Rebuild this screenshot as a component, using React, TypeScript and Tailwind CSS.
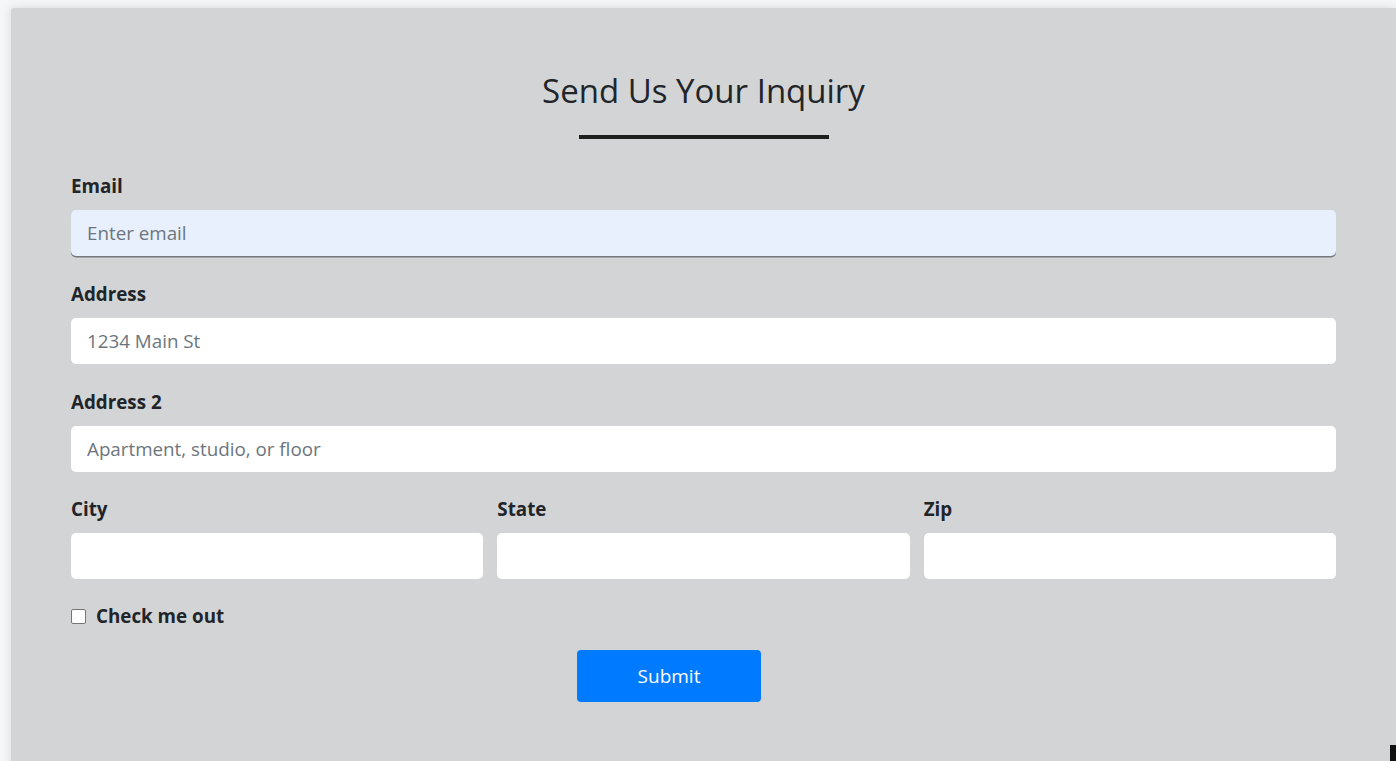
import React from "react";

const font = { fontFamily: '"Open Sans", "Noto Sans", Arial, sans-serif' };

function Field({ label, placeholder, autofill = false }: { label: string; placeholder?: string; autofill?: boolean }) {
  return (
    <div className="flex flex-col">
      <label className="h-6 text-[18.8px] leading-6 font-bold text-[#212529]">{label}</label>
      <input
        type="text"
        placeholder={placeholder}
        className={
          autofill
            ? "mt-3 h-[46px] w-full rounded-[5px] bg-[#e8f0fe] px-4 text-[18.8px] text-[#495057] placeholder:text-[#6c757d] outline-none shadow-[0_1.5px_0_#74777b]"
            : "mt-3 h-[46px] w-full rounded-[5px] bg-white px-4 text-[18.8px] text-[#495057] placeholder:text-[#6c757d] outline-none"
        }
      />
    </div>
  );
}

export default function App() {
  return (
    <div className="relative h-[761px] w-[1396px] overflow-hidden bg-[#f5f6f7] pl-[11px] pt-2" style={font}>
      <div className="h-[800px] w-full rounded-tl-[3px] bg-[#d3d4d6] px-[60px] pt-[63px] shadow-[0_0_10px_rgba(0,0,0,0.12)]">
        {/* Heading */}
        <h2 className="h-10 text-center text-[33px] leading-10 font-normal text-[#212529]">Send Us Your Inquiry</h2>
        <div className="mx-auto mt-6 h-1 w-[250px] bg-[#1e1e1e]" />

        <form className="mt-[35px] flex flex-col">
          <Field label="Email" placeholder="Enter email" autofill />
          <div className="mt-[26px]">
            <Field label="Address" placeholder="1234 Main St" />
          </div>
          <div className="mt-[26px]">
            <Field label="Address 2" placeholder="Apartment, studio, or floor" />
          </div>
          <div className="mt-[25px] grid grid-cols-3 gap-[14px]">
            <Field label="City" />
            <Field label="State" />
            <Field label="Zip" />
          </div>

          <label className="mt-[25px] flex h-6 items-center gap-[10px] text-[18.8px] font-bold text-[#212529]">
            <span className="h-[15px] w-[15px] rounded-[2px] border border-[#767676] bg-white" />
            Check me out
          </label>

          <div className="mt-[22px] flex">
            <button
              type="button"
              className="ml-[506px] h-[52px] w-[184px] rounded-[4px] bg-[#007bff] text-[19px] text-white"
            >
              Submit
            </button>
          </div>
        </form>
      </div>
      <div className="absolute bottom-0 right-0 h-4 w-[6px] bg-[#111]" />
    </div>
  );
}
